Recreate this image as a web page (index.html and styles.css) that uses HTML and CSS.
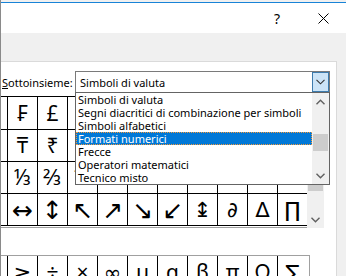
FILE: index.html
```html
<!DOCTYPE html>
<html lang="it">

<head>
  <meta charset="UTF-8">
  <title>Simbolo</title>
  <link rel="stylesheet" href="styles.css">
</head>

<body>
  <div class="window">
    <div class="titlebar">
      <span class="title-btn help">?</span>
      <span class="title-btn close">
        <svg width="11" height="11" viewBox="0 0 11 11"><path d="M0.5 0.5 L10.5 10.5 M10.5 0.5 L0.5 10.5" stroke="#000" stroke-width="1" fill="none"/></svg>
      </span>
    </div>
    <div class="band"></div>

    <div class="panel">
      <div class="subset">
        <label class="subset-label" for="subset"><u>S</u>ottoinsieme:</label>
        <div class="combo" id="subset">
          <span class="combo-text">Simboli di valuta</span>
          <span class="combo-btn">
            <svg width="9" height="6" viewBox="0 0 9 6"><path d="M0.5 0.8 L4.5 4.8 L8.5 0.8" stroke="#333" stroke-width="1.1" fill="none"/></svg>
          </span>

          <!-- open list -->
          <div class="dropdown">
            <ul class="options">
              <li>Simboli di valuta</li>
              <li>Segni diacritici di combinazione per simboli</li>
              <li>Simboli alfabetici</li>
              <li class="selected">Formati numerici</li>
              <li>Frecce</li>
              <li>Operatori matematici</li>
              <li>Tecnico misto</li>
            </ul>
            <div class="scrollbar">
              <div class="arrow">
                <svg width="9" height="6" viewBox="0 0 9 6"><path d="M0.5 5.2 L4.5 1.2 L8.5 5.2" stroke="#606060" stroke-width="1.4" fill="none"/></svg>
              </div>
              <div class="track"><div class="thumb list-thumb"></div></div>
              <div class="arrow">
                <svg width="9" height="6" viewBox="0 0 9 6"><path d="M0.5 0.8 L4.5 4.8 L8.5 0.8" stroke="#606060" stroke-width="1.4" fill="none"/></svg>
              </div>
            </div>
          </div>
        </div>
      </div>

      <div class="grid-wrap">
        <div class="grid">
          <span class="cell"></span><span class="cell">₣</span><span class="cell">£</span><span class="cell"></span><span class="cell"></span><span class="cell"></span><span class="cell"></span><span class="cell"></span><span class="cell"></span><span class="cell"></span><span class="cell"></span>
          <span class="cell"></span><span class="cell">₸</span><span class="cell">₹</span><span class="cell"></span><span class="cell"></span><span class="cell"></span><span class="cell"></span><span class="cell"></span><span class="cell"></span><span class="cell"></span><span class="cell"></span>
          <span class="cell"></span><span class="cell">⅓</span><span class="cell">⅔</span><span class="cell">⅛</span><span class="cell">⅜</span><span class="cell">⅝</span><span class="cell">⅞</span><span class="cell">←</span><span class="cell">↑</span><span class="cell">→</span><span class="cell">↓</span>
          <span class="cell"></span><span class="cell big">↔</span><span class="cell big">↕</span><span class="cell big">↖</span><span class="cell big">↗</span><span class="cell big">↘</span><span class="cell big">↙</span><span class="cell">↨</span><span class="cell">∂</span><span class="cell">∆</span><span class="cell">∏</span>
        </div>
        <div class="scrollbar grid-scroll">
          <div class="arrow"></div>
          <div class="track"><div class="thumb grid-thumb"></div></div>
          <div class="arrow">
            <svg width="9" height="6" viewBox="0 0 9 6"><path d="M0.5 0.8 L4.5 4.8 L8.5 0.8" stroke="#606060" stroke-width="1.4" fill="none"/></svg>
          </div>
        </div>
      </div>

      <div class="recent">
        <span class="cell"></span><span class="cell">≥</span><span class="cell">÷</span><span class="cell">×</span><span class="cell">∞</span><span class="cell">µ</span><span class="cell">α</span><span class="cell">β</span><span class="cell">π</span><span class="cell">Ω</span><span class="cell">∑</span>
      </div>
    </div>
  </div>
</body>

</html>
```

FILE: styles.css
```css
body {
  margin: 0;
  padding: 0;
  width: 346px;
  height: 276px;
  overflow: hidden;
  font-family: 'Noto Sans', 'DejaVu Sans', sans-serif;
  font-size: 11px;
  color: #000;
}

*,
*:before,
*:after {
  box-sizing: border-box;
}

.window {
  height: 276px;
  padding-top: 2px;
  background: #f0f0f0;
  border-left: 1px solid #8a8a8a;
  overflow: hidden;
}

.titlebar {
  height: 31px;
  background: #fff;
  border-top: 1px solid #1883d7;
  display: flex;
  justify-content: flex-end;
}

.title-btn {
  width: 46px;
  display: flex;
  align-items: center;
  justify-content: center;
}

.help {
  font-size: 14px;
  padding-top: 1px;
}

.close svg {
  display: block;
}

.band {
  height: 28px;
}

.panel {
  width: 336px;
  height: 215px;
  background: #fff;
  border-top: 1px solid #dadada;
  border-right: 1px solid #dadada;
  overflow: hidden;
}

/* subset row */
.subset {
  display: flex;
  align-items: center;
  margin-top: 9px;
}

.subset-label {
  width: 74px;
  padding-left: 1px;
  padding-top: 1px;
}

.combo {
  position: relative;
  width: 255px;
  height: 22px;
  border: 1px solid #7a7a7a;
  background: #fff;
  display: flex;
  align-items: center;
  padding-left: 4px;
}

.combo-btn {
  position: absolute;
  top: 0;
  right: 0;
  width: 17px;
  height: 20px;
  background: #cce4f7;
  border: 1px solid #3d7bad;
  display: flex;
  align-items: center;
  justify-content: center;
}

.dropdown {
  position: absolute;
  top: 100%;
  left: -1px;
  width: 255px;
  height: 93px;
  border: 1px solid #646464;
  background: #fff;
  display: flex;
  z-index: 2;
}

.options {
  list-style: none;
  margin: 0;
  padding: 0;
  flex: 1;
}

.options li {
  height: 13px;
  line-height: 13px;
  padding-left: 2px;
  white-space: nowrap;
}

.options li.selected {
  background: #0078d7;
  color: #fff;
  outline: 1px dotted #f39a3a;
  outline-offset: -1px;
}

/* scrollbars */
.scrollbar {
  width: 17px;
  background: #f0f0f0;
  display: flex;
  flex-direction: column;
}

.scrollbar .arrow {
  height: 17px;
  display: flex;
  align-items: center;
  justify-content: center;
}

.track {
  flex: 1;
}

.thumb {
  margin: 0 1px;
  background: #cdcdcd;
}

.list-thumb {
  margin-top: 24px;
  height: 17px;
}

/* character grid */
.grid-wrap {
  display: flex;
  margin-top: 3px;
  padding-bottom: 1px;
  border-bottom: 1px solid #a0a0a0;
  width: 323px;
}

.grid {
  display: grid;
  grid-template-columns: 7px repeat(9, 30px) 29px;
  grid-template-rows: 33px 32px 32px 32px;
  border-top: 1px solid #000;
}

.grid-scroll {
  margin-bottom: -2px;
}

.grid-thumb {
  margin-top: 37px;
  height: 41px;
}

.cell {
  display: flex;
  align-items: center;
  justify-content: center;
  border-right: 1px solid #000;
  border-bottom: 1px solid #000;
  font-family: 'Noto Sans', 'DejaVu Sans', sans-serif;
  font-size: 21px;
  line-height: 1;
}

.grid .cell:nth-child(11n),
.recent .cell:nth-child(11n) {
  border-right: none;
}

.cell.big {
  font-size: 25px;
}

/* recently used */
.recent {
  display: grid;
  grid-template-columns: 7px repeat(9, 30px) 29px;
  grid-template-rows: 32px;
  width: 309px;
  margin-top: 27px;
  border-top: 1px solid #a0a0a0;
  border-right: 1px solid #a0a0a0;
}

.recent .cell {
  border-bottom: none;
}
```
